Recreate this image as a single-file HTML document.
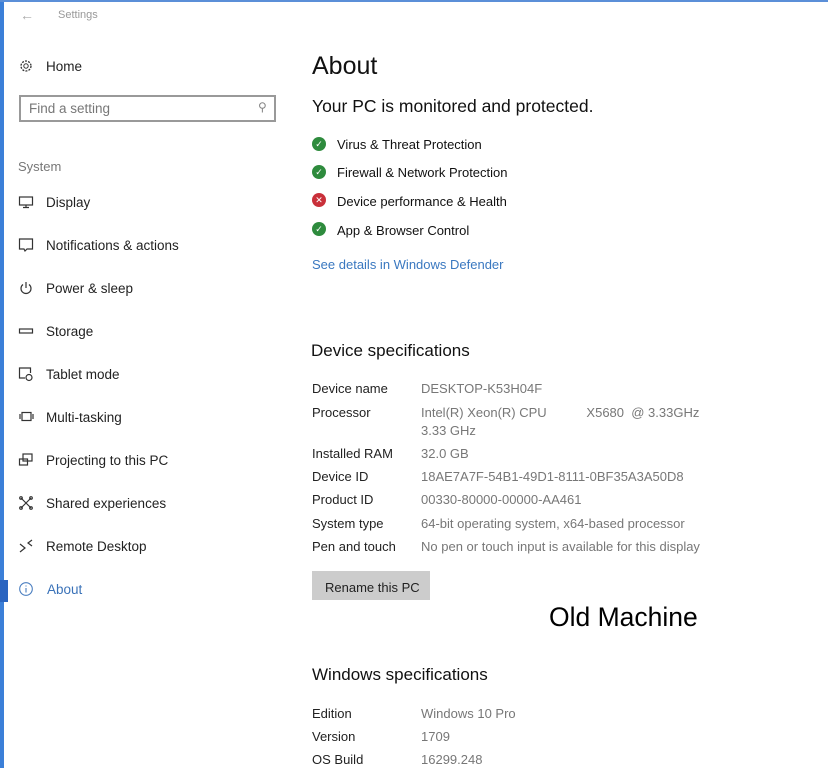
<!DOCTYPE html>
<html><head><meta charset="utf-8"><style>
*{margin:0;padding:0;box-sizing:border-box}
body{width:828px;height:768px;overflow:hidden;background:#fff;font-family:"Liberation Sans",sans-serif;color:#1a1a1a;position:relative}
.a{position:absolute;white-space:nowrap}
.nav{font-size:13.5px;color:#222}
.ic{position:absolute;left:18px;width:16px;height:16px}
.lbl{font-size:13px;color:#222}
.val{font-size:13px;color:#777}
.chk{position:absolute;left:312px;width:14px;height:14px;border-radius:50%;background:#2e8b3d;color:#fff;font-size:9px;line-height:14px;text-align:center}
.chk.r{background:#c9303a}
.sec{font-size:13px;color:#111}
</style></head><body>
<div class="a" style="left:0;top:0;width:4px;height:768px;background:#3b7fd8"></div>
<div class="a" style="left:0;top:0;width:828px;height:2px;background:#5b8fd8"></div>
<div class="a" style="left:0;top:580px;width:8px;height:22px;background:#2a64c0"></div>
<div class="a" style="left:20px;top:7px;font-size:14px;color:#aaa">&#8592;</div>
<div class="a" style="left:58px;top:9px;font-size:11px;color:#999">Settings</div>

<svg class="ic" style="top:58px" viewBox="0 0 16 16"><circle cx="8" cy="8" r="5" fill="none" stroke="#333" stroke-width="1.3" stroke-dasharray="2 1.2"/><circle cx="8" cy="8" r="2.2" fill="none" stroke="#333"/></svg>
<div class="a nav" style="left:46px;top:59px">Home</div>
<div class="a" style="left:19px;top:95px;width:257px;height:27px;border:2px solid #999"></div>
<div class="a" style="left:29px;top:101px;font-size:13.5px;color:#777">Find a setting</div>
<div class="a" style="left:258px;top:100px;font-size:12px;color:#888">&#9906;</div>
<div class="a" style="left:18px;top:159px;font-size:13px;color:#777">System</div>

<svg class="ic" style="top:194px" viewBox="0 0 16 16" fill="none" stroke="#333" stroke-width="1.2"><rect x="1.5" y="3" width="13" height="8"/><path d="M8 11v2M5 13.5h6"/></svg>
<div class="a nav" style="left:46px;top:195px">Display</div>
<svg class="ic" style="top:237px" viewBox="0 0 16 16" fill="none" stroke="#333" stroke-width="1.2"><path d="M1.5 2h13v10H9l-2 2-1-2H1.5z"/></svg>
<div class="a nav" style="left:46px;top:238px">Notifications &amp; actions</div>
<svg class="ic" style="top:280px" viewBox="0 0 16 16" fill="none" stroke="#333" stroke-width="1.2"><path d="M8 2v6M5 4.5a5 5 0 1 0 6 0"/></svg>
<div class="a nav" style="left:46px;top:281px">Power &amp; sleep</div>
<svg class="ic" style="top:323px" viewBox="0 0 16 16" fill="none" stroke="#333" stroke-width="1.2"><rect x="1.5" y="6" width="13" height="4"/></svg>
<div class="a nav" style="left:46px;top:324px">Storage</div>
<svg class="ic" style="top:366px" viewBox="0 0 16 16" fill="none" stroke="#333" stroke-width="1.2"><path d="M7 12H1.5V2h11v5"/><circle cx="11" cy="11.5" r="3"/></svg>
<div class="a nav" style="left:46px;top:367px">Tablet mode</div>
<svg class="ic" style="top:409px" viewBox="0 0 16 16" fill="none" stroke="#333" stroke-width="1.2"><rect x="4" y="3.5" width="9" height="8"/><path d="M2 5v5M15 5v5"/></svg>
<div class="a nav" style="left:46px;top:410px">Multi-tasking</div>
<svg class="ic" style="top:452px" viewBox="0 0 16 16" fill="none" stroke="#333" stroke-width="1.2"><rect x="5" y="2" width="9" height="7"/><rect x="1.5" y="7" width="8" height="6"/></svg>
<div class="a nav" style="left:46px;top:453px">Projecting to this PC</div>
<svg class="ic" style="top:495px" viewBox="0 0 16 16" fill="none" stroke="#333" stroke-width="1.2"><path d="M3 3l10 10M13 3L3 13"/><circle cx="3" cy="3" r="1.3"/><circle cx="13" cy="3" r="1.3"/><circle cx="3" cy="13" r="1.3"/><circle cx="13" cy="13" r="1.3"/></svg>
<div class="a nav" style="left:46px;top:496px">Shared experiences</div>
<svg class="ic" style="top:538px" viewBox="0 0 16 16" fill="none" stroke="#333" stroke-width="1.2"><path d="M2 6l5 4-5 4M14 2l-4 3 4 3"/></svg>
<div class="a nav" style="left:46px;top:539px">Remote Desktop</div>
<svg class="ic" style="top:581px" viewBox="0 0 16 16" fill="none" stroke="#4a7ec0" stroke-width="1.1"><circle cx="8" cy="8" r="6.3"/><path d="M8 7v4.5M8 4.5v1"/></svg>
<div class="a nav" style="left:47px;top:582px;color:#3a72b8">About</div>

<div class="a" style="left:312px;top:52px;font-size:25px;color:#111">About</div>
<div class="a" style="left:312px;top:96px;font-size:17.5px;color:#111">Your PC is monitored and protected.</div>
<div class="chk" style="top:137px">&#10003;</div><div class="a sec" style="left:337px;top:137px">Virus &amp; Threat Protection</div>
<div class="chk" style="top:165px">&#10003;</div><div class="a sec" style="left:337px;top:165px">Firewall &amp; Network Protection</div>
<div class="chk r" style="top:193px">&#10005;</div><div class="a sec" style="left:337px;top:194px">Device performance &amp; Health</div>
<div class="chk" style="top:222px">&#10003;</div><div class="a sec" style="left:337px;top:223px">App &amp; Browser Control</div>
<div class="a" style="left:312px;top:257px;font-size:13px;color:#3a78c0">See details in Windows Defender</div>

<div class="a" style="left:311px;top:341px;font-size:17px;color:#111">Device specifications</div>
<div class="a lbl" style="left:312px;top:381px">Device name</div><div class="a val" style="left:421px;top:381px">DESKTOP-K53H04F</div>
<div class="a lbl" style="left:312px;top:405px">Processor</div><div class="a val" style="left:421px;top:405px">Intel(R) Xeon(R) CPU&nbsp;&nbsp;&nbsp;&nbsp;&nbsp;&nbsp;&nbsp;&nbsp;&nbsp;&nbsp;&nbsp;X5680&nbsp; @ 3.33GHz</div>
<div class="a val" style="left:421px;top:423px">3.33 GHz</div>
<div class="a lbl" style="left:312px;top:446px">Installed RAM</div><div class="a val" style="left:421px;top:446px">32.0 GB</div>
<div class="a lbl" style="left:312px;top:469px">Device ID</div><div class="a val" style="left:421px;top:469px">18AE7A7F-54B1-49D1-8111-0BF35A3A50D8</div>
<div class="a lbl" style="left:312px;top:492px">Product ID</div><div class="a val" style="left:421px;top:492px">00330-80000-00000-AA461</div>
<div class="a lbl" style="left:312px;top:516px">System type</div><div class="a val" style="left:421px;top:516px">64-bit operating system, x64-based processor</div>
<div class="a lbl" style="left:312px;top:539px">Pen and touch</div><div class="a val" style="left:421px;top:539px">No pen or touch input is available for this display</div>
<div class="a" style="left:312px;top:571px;width:118px;height:29px;background:#ccc"></div>
<div class="a" style="left:325px;top:580px;font-size:13px;color:#222">Rename this PC</div>
<div class="a" style="left:549px;top:602px;font-size:26.5px;color:#000">Old Machine</div>

<div class="a" style="left:312px;top:665px;font-size:17px;color:#111">Windows specifications</div>
<div class="a lbl" style="left:312px;top:706px">Edition</div><div class="a val" style="left:421px;top:706px">Windows 10 Pro</div>
<div class="a lbl" style="left:312px;top:729px">Version</div><div class="a val" style="left:421px;top:729px">1709</div>
<div class="a lbl" style="left:312px;top:752px">OS Build</div><div class="a val" style="left:421px;top:752px">16299.248</div>
</body></html>
